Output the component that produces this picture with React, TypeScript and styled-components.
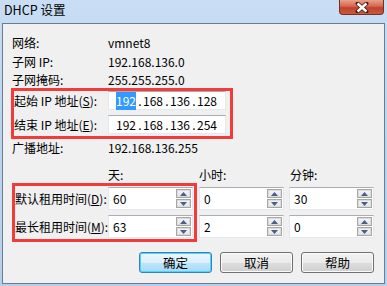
import React from 'react';
import styled, { createGlobalStyle } from 'styled-components';

const GlobalStyle = createGlobalStyle`
  html, body {
    margin: 0;
    padding: 0;
    background: #bcd5ef;
  }
  body {
    font-family: "Noto Sans CJK SC", "Liberation Sans", sans-serif;
    font-size: 12px;
    color: #000;
  }
`;

const Window = styled.div`
  width: 387px;
  height: 286px;
  box-sizing: border-box;
  display: flex;
  flex-direction: column;
  padding: 0 2px 2px 2px;
  background: linear-gradient(180deg, #c9def4 0%, #bcd5ef 40%, #b6d0ec 100%);
`;

const TitleBar = styled.div`
  height: 23px;
  display: flex;
  align-items: flex-start;
  justify-content: space-between;
`;

const Title = styled.div`
  padding: 2px 0 0 2px;
  font-size: 12.5px;
  line-height: 16px;
  color: #000;
`;

const CloseButton = styled.div`
  width: 45px;
  height: 15px;
  box-sizing: border-box;
  margin-right: 1px;
  border: 1px solid #7b2d22;
  border-top: none;
  border-radius: 0 0 4px 4px;
  background: linear-gradient(180deg, #e8a08c 0%, #d4674f 45%, #c2412a 55%, #c75a40 100%);
  display: flex;
  align-items: center;
  justify-content: center;
`;

const Client = styled.div`
  flex: 1;
  display: flex;
  flex-direction: column;
  border: 1px solid #6d7d90;
  background: #f0f0f0;
  padding: 9px 9px 0 9px;
`;

const InfoRow = styled.div<{ $h?: number }>`
  display: flex;
  align-items: center;
  height: ${(p) => p.$h ?? 18}px;
`;

const Label = styled.div<{ $w?: number }>`
  width: ${(p) => p.$w ?? 96}px;
  flex-shrink: 0;
  white-space: nowrap;
`;

const Value = styled.div`
  white-space: nowrap;
`;

const Highlight = styled.div`
  border: 3px solid #f23c3c;
  display: flex;
  flex-direction: column;
  gap: 5px;
`;

const IpHighlight = styled(Highlight)`
  width: 216px;
  margin-left: -1px;
  padding: 0 0 2px 0;
`;

const FieldRow = styled.div`
  display: flex;
  align-items: center;
`;

const IpBox = styled.div`
  width: 118px;
  height: 19px;
  box-sizing: border-box;
  background: #fff;
  border: 1px solid #e3e9ef;
  border-top-color: #abadb3;
  display: flex;
  align-items: center;
  padding-left: 7px;
`;

const IpSeg = styled.span<{ $sel?: boolean }>`
  display: inline-block;
  width: 21px;
  span {
    background: ${(p) => (p.$sel ? '#3399ff' : 'transparent')};
    color: ${(p) => (p.$sel ? '#fff' : '#000')};
    padding: 0 0 1px 0;
  }
`;

const IpDot = styled.span`
  display: inline-block;
  width: 6px;
  text-align: center;
`;

const LeaseHeader = styled.div`
  display: flex;
  height: 18px;
  align-items: center;
  margin-top: 9px;
  padding-left: 96px;
  gap: 6px;
`;

const HeadCell = styled.div`
  width: 85px;
`;

const LeaseArea = styled.div`
  display: flex;
  align-items: flex-start;
`;

const LeaseHighlight = styled(Highlight)`
  padding: 1px 1px 1px 0;
  gap: 5px;
`;

const SpinColumn = styled.div<{ $ml: number }>`
  display: flex;
  flex-direction: column;
  gap: 5px;
  padding-top: 4px;
  margin-left: ${(p) => p.$ml}px;
`;

const SpinBox = styled.div`
  width: 85px;
  height: 23px;
  box-sizing: border-box;
  background: #fff;
  border: 1px solid #e3e9ef;
  border-top-color: #abadb3;
  display: flex;
  align-items: center;
  justify-content: space-between;
  padding: 0 1px 0 4px;
`;

const SpinButtons = styled.div`
  display: flex;
  flex-direction: column;
  gap: 1px;
`;

const SpinButton = styled.div`
  width: 15px;
  height: 9px;
  box-sizing: border-box;
  border: 1px solid #a7a7a7;
  box-shadow: inset 0 0 0 1px #dcdcdc;
  background: linear-gradient(180deg, #f4f4f4 0%, #e6e6e6 100%);
  display: flex;
  align-items: center;
  justify-content: center;
`;

const ButtonBar = styled.div`
  display: flex;
  justify-content: flex-end;
  gap: 8px;
  margin-top: 10px;
  padding-right: 1px;
`;

const Button = styled.div<{ $primary?: boolean }>`
  width: 73px;
  height: 21px;
  box-sizing: border-box;
  border: 1px solid ${(p) => (p.$primary ? '#3c7fb1' : '#707070')};
  border-radius: 3px;
  box-shadow: inset 0 0 0 1px ${(p) => (p.$primary ? '#48d6fd' : '#fbfbfb')};
  background: ${(p) =>
    p.$primary
      ? 'linear-gradient(180deg, #eaf6fd 0%, #d9f0fc 50%, #bee6fd 51%, #a7d9f5 100%)'
      : 'linear-gradient(180deg, #f2f2f2 0%, #ebebeb 50%, #dddddd 51%, #cfcfcf 100%)'};
  display: flex;
  align-items: center;
  justify-content: center;
  font-size: 12.5px;
`;

const Arrow = ({ up }: { up?: boolean }) => (
  <svg width="7" height="4" viewBox="0 0 7 4">
    <path d={up ? 'M0 4 L3.5 0 L7 4 Z' : 'M0 0 L3.5 4 L7 0 Z'} fill="#4a5f8a" />
  </svg>
);

const Spin = ({ value }: { value: string }) => (
  <SpinBox>
    <span>{value}</span>
    <SpinButtons>
      <SpinButton>
        <Arrow up />
      </SpinButton>
      <SpinButton>
        <Arrow />
      </SpinButton>
    </SpinButtons>
  </SpinBox>
);

const Ip = ({ parts, selFirst }: { parts: string[]; selFirst?: boolean }) => (
  <IpBox>
    {parts.map((p, i) => (
      <React.Fragment key={i}>
        {i > 0 && <IpDot>.</IpDot>}
        <IpSeg $sel={selFirst && i === 0}>
          <span>{p}</span>
        </IpSeg>
      </React.Fragment>
    ))}
  </IpBox>
);

export default function App() {
  return (
    <>
      <GlobalStyle />
      <Window>
        <TitleBar>
          <Title>DHCP 设置</Title>
          <CloseButton>
            <svg width="14" height="11" viewBox="0 0 14 11">
              <path
                d="M2.5 1.5 L11.5 9.5 M11.5 1.5 L2.5 9.5"
                stroke="#4a1a14"
                strokeWidth="4"
                fill="none"
                strokeLinecap="round"
              />
              <path
                d="M2.5 1.5 L11.5 9.5 M11.5 1.5 L2.5 9.5"
                stroke="#fff"
                strokeWidth="2.4"
                fill="none"
              />
            </svg>
          </CloseButton>
        </TitleBar>
        <Client>
          <InfoRow $h={19}>
            <Label>网络:</Label>
            <Value>vmnet8</Value>
          </InfoRow>
          <InfoRow>
            <Label>子网 IP:</Label>
            <Value>192.168.136.0</Value>
          </InfoRow>
          <InfoRow>
            <Label>子网掩码:</Label>
            <Value>255.255.255.0</Value>
          </InfoRow>
          <IpHighlight>
            <FieldRow>
              <Label $w={94}>
                起始 IP 地址(<u>S</u>):
              </Label>
              <Ip parts={['192', '168', '136', '128']} selFirst />
            </FieldRow>
            <FieldRow>
              <Label $w={94}>
                结束 IP 地址(<u>E</u>):
              </Label>
              <Ip parts={['192', '168', '136', '254']} />
            </FieldRow>
          </IpHighlight>
          <InfoRow $h={17}>
            <Label>广播地址:</Label>
            <Value>192.168.136.255</Value>
          </InfoRow>
          <LeaseHeader>
            <HeadCell>天:</HeadCell>
            <HeadCell>小时:</HeadCell>
            <HeadCell>分钟:</HeadCell>
          </LeaseHeader>
          <LeaseArea>
            <LeaseHighlight>
              <FieldRow>
                <Label $w={93}>
                  默认租用时间(<u>D</u>):
                </Label>
                <Spin value="60" />
              </FieldRow>
              <FieldRow>
                <Label $w={93}>
                  最长租用时间(<u>M</u>):
                </Label>
                <Spin value="63" />
              </FieldRow>
            </LeaseHighlight>
            <SpinColumn $ml={2}>
              <Spin value="0" />
              <Spin value="2" />
            </SpinColumn>
            <SpinColumn $ml={5}>
              <Spin value="30" />
              <Spin value="0" />
            </SpinColumn>
          </LeaseArea>
          <ButtonBar>
            <Button $primary>确定</Button>
            <Button>取消</Button>
            <Button>帮助</Button>
          </ButtonBar>
        </Client>
      </Window>
    </>
  );
}
